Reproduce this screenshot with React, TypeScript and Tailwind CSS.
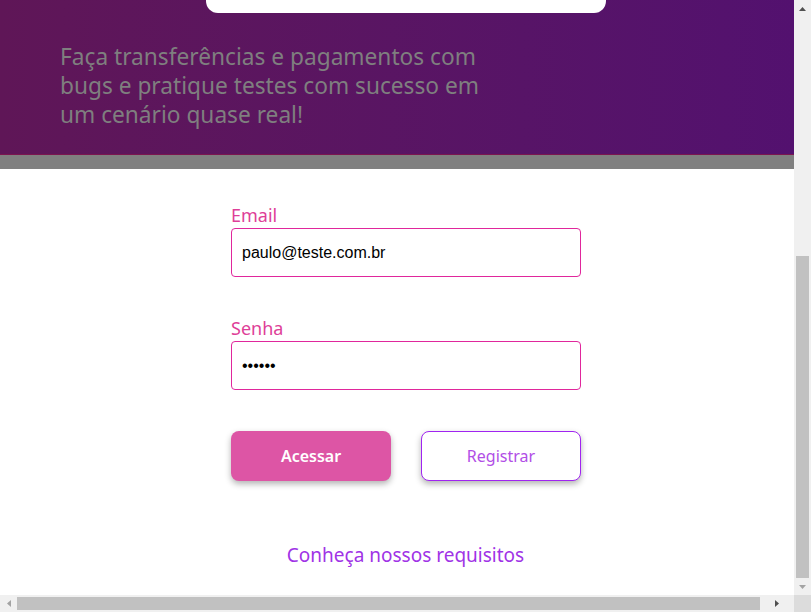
import React from "react";

function UpArrow({ color }: { color: string }) {
  return (
    <svg width="7" height="4" viewBox="0 0 7 4">
      <polygon points="0,4 3.5,0 7,4" fill={color} />
    </svg>
  );
}
function DownArrow({ color }: { color: string }) {
  return (
    <svg width="7" height="4" viewBox="0 0 7 4">
      <polygon points="0,0 3.5,4 7,0" fill={color} />
    </svg>
  );
}
function LeftArrow({ color }: { color: string }) {
  return (
    <svg width="4" height="7" viewBox="0 0 4 7">
      <polygon points="4,0 0,3.5 4,7" fill={color} />
    </svg>
  );
}
function RightArrow({ color }: { color: string }) {
  return (
    <svg width="4" height="7" viewBox="0 0 4 7">
      <polygon points="0,0 4,3.5 0,7" fill={color} />
    </svg>
  );
}

export default function App() {
  const nunito = { fontFamily: '"Noto Sans", "Open Sans", sans-serif' };
  const arial = { fontFamily: '"Liberation Sans", Arial, sans-serif' };
  return (
    <div className="w-[811px] h-[612px] flex flex-col overflow-hidden bg-white">
      <div className="flex flex-1 min-h-0">
        <main className="w-[794px] flex flex-col" style={nunito}>
          <header className="h-[154px] bg-gradient-to-r from-[#5f1657] to-[#53116f] flex flex-col">
            <div className="ml-[206px] w-[400px] h-[13px] bg-white rounded-b-[12px]" />
            <p className="ml-[60px] mt-[29px] w-[460px] text-[22.7px] leading-[29px] text-[#7f7f7f]">
              Faça transferências e pagamentos com bugs e pratique testes com sucesso em um cenário quase real!
            </p>
          </header>
          <div className="h-px bg-[#7c1550]" />
          <div className="h-[14px] bg-[#808080]" />
          <div className="flex flex-col ml-[231px] w-[350px] pt-[35px]">
            <label className="text-[18px] leading-[22px] text-[#de3f98]">Email</label>
            <div className="mt-[2px] h-[49px] border border-[#e0279c] rounded-[4px] flex items-center pl-[10px] text-[16px] text-black" style={arial}>
              paulo@teste.com.br
            </div>
            <label className="mt-[40px] text-[18px] leading-[22px] text-[#de3f98]">Senha</label>
            <div className="mt-[2px] h-[49px] border border-[#e0279c] rounded-[4px] flex items-center pl-[10px] text-[16px] text-black" style={arial}>
              ••••••
            </div>
            <div className="mt-[41px] flex justify-between">
              <button className="w-[160px] h-[50px] rounded-[8px] bg-[#dd55a5] text-white text-[16px] font-semibold shadow-[0_3px_6px_rgba(0,0,0,0.3)]">
                Acessar
              </button>
              <button className="w-[160px] h-[50px] rounded-[8px] bg-white border border-[#a024f0] text-[#b14ee6] text-[16px] shadow-[0_3px_6px_rgba(0,0,0,0.3)]">
                Registrar
              </button>
            </div>
          </div>
          <div className="mt-[61px] text-center pl-[17px] text-[19px] leading-[26px] text-[#a033e6]">
            Conheça nossos requisitos
          </div>
        </main>
        <div className="w-[17px] bg-[#f0f0f0] flex flex-col items-center">
          <div className="h-[17px] flex items-center justify-center">
            <UpArrow color="#505050" />
          </div>
          <div className="flex-1 flex flex-col w-full px-[2px]">
            <div className="h-[239px]" />
            <div className="h-[322px] bg-[#c1c1c1]" />
          </div>
          <div className="h-[17px] flex items-center justify-center">
            <DownArrow color="#a3a3a3" />
          </div>
        </div>
      </div>
      <div className="h-[17px] flex bg-[#f0f0f0]">
        <div className="w-[17px] flex items-center justify-center">
          <LeftArrow color="#a3a3a3" />
        </div>
        <div className="w-[743px] py-[2px]">
          <div className="h-full bg-[#c1c1c1]" />
        </div>
        <div className="w-[34px] flex items-center justify-center">
          <RightArrow color="#505050" />
        </div>
        <div className="w-[17px] bg-[#dcdcdc]" />
      </div>
    </div>
  );
}
